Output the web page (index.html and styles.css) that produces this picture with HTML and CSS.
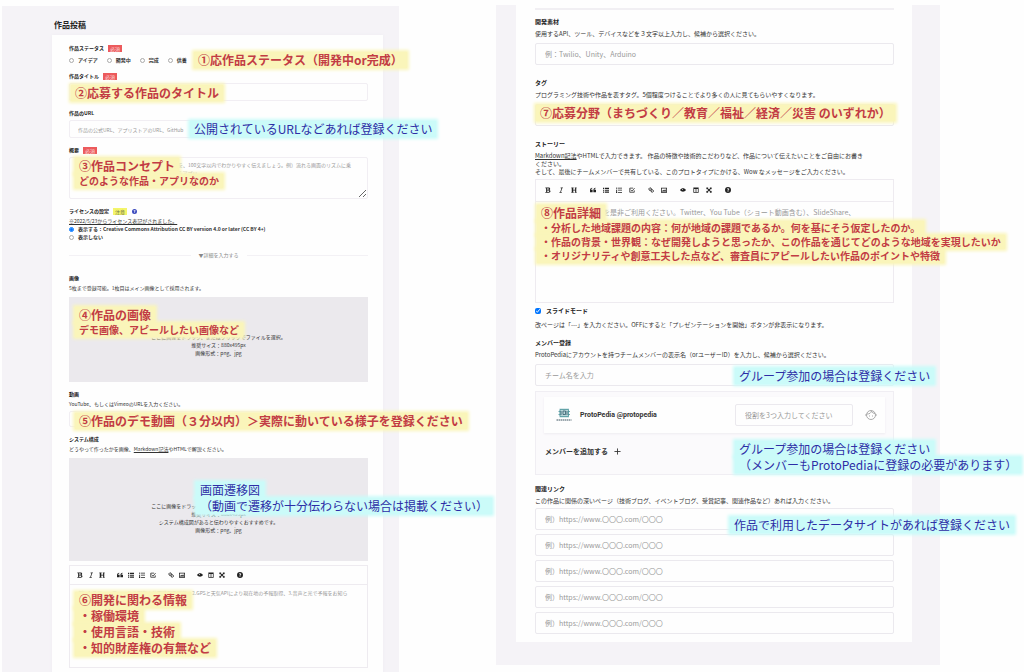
FILE: index.html
```html
<!DOCTYPE html>
<html lang="ja">
<head>
<meta charset="utf-8">
<title>作品投稿</title>
<link rel="stylesheet" href="styles.css">
</head>
<body>
<svg class="sprite" aria-hidden="true">
  <symbol id="i-bold" viewBox="0 0 16 16"><path fill-rule="evenodd" d="M1 1h8c6 0 6 6 2 7 5 1 5 7-1 7H1v-2h2V3H1zM6 3v4h2c3 0 3-4 0-4zm0 6v4h3c3 0 3-4 0-4z"/></symbol>
  <symbol id="i-italic" viewBox="0 0 16 16"><path d="M7 1h6v2h-2L8 13h2v2H4v-2h2L9 3H7z"/></symbol>
  <symbol id="i-head" viewBox="0 0 16 16"><path d="M1 1h6v2H6v4h5V3h-1V1h5v2h-1v10h1v2h-5v-2h1V9H6v4h1v2H1v-2h1V3H1z"/></symbol>
  <symbol id="i-quote" viewBox="0 0 16 16"><path d="M0 9c0-4 2-7 6-7v2C4 4 3 6 3 7h4v7H0zm9 0c0-4 2-7 6-7v2c-2 0-3 2-3 3h4v7H9z"/></symbol>
  <symbol id="i-ul" viewBox="0 0 16 16"><path d="M0 2h3v3H0zm5 0h11v3H5zM0 7h3v3H0zm5 0h11v3H5zM0 12h3v3H0zm5 0h11v3H5z"/></symbol>
  <symbol id="i-ol" viewBox="0 0 16 16"><path d="M1 1h2v4H1zm4 1h11v2H5zM0 7h3v1L1 10h2v1H0zm5 0h11v2H5zM0 12h3v4H0zm5 1h11v2H5z"/></symbol>
  <symbol id="i-check" viewBox="0 0 16 16"><path fill="none" stroke="currentColor" stroke-width="2" d="M14 9v5H2V3h9M4 7l4 4 7-8"/></symbol>
  <symbol id="i-link" viewBox="0 0 16 16"><path fill="none" stroke="currentColor" stroke-width="2.4" d="M8 8 4 9 2 5l3-3 4 2v3M8 8l4-1 3 4-3 3-4-2V9"/></symbol>
  <symbol id="i-image" viewBox="0 0 16 16"><path fill-rule="evenodd" d="M0 2h16v13H0zm2 2v9h12V4zm0 8 4-5 2 3 3-4 3 6z"/></symbol>
  <symbol id="i-eye" viewBox="0 0 16 16"><path fill-rule="evenodd" d="M0 8c4-6 12-6 16 0-4 6-12 6-16 0zm6-2v2h2V5z"/></symbol>
  <symbol id="i-cols" viewBox="0 0 16 16"><path fill-rule="evenodd" d="M1 1h14v14H1zm2 4v8h4V5zm6 0v8h4V5z"/></symbol>
  <symbol id="i-full" viewBox="0 0 16 16"><path d="M1 1h5L5 3l3 3 3-3-1-2h5v5l-2-1-3 3 3 3 2-1v5h-5l1-2-3-3-3 3 1 2H1v-5l2 1 3-3-3-3-2 1z"/></symbol>
  <symbol id="i-help" viewBox="0 0 16 16"><path fill-rule="evenodd" d="M8 0a8 8 0 1 1 0 16A8 8 0 0 1 8 0zM5 6h2c0-2 3-2 2 0L7 8v2h2V9c5-3 1-8-3-5zm2 5v2h2v-2z"/></symbol>
</svg>

<div class="page">
  <main class="panel panel-main">
    <h1 class="page-title">作品投稿</h1>
    <form class="card">
      <fieldset class="field">
        <legend class="label">作品ステータス <span class="required">必須</span></legend>
        <div class="choices choices-row">
          <label><input type="radio" name="status">アイデア</label>
          <label><input type="radio" name="status">開発中</label>
          <label><input type="radio" name="status">完成</label>
          <label><input type="radio" name="status">供養</label>
        </div>
        <div class="note note-red note-status"><p>①応作品ステータス（開発中or完成）</p></div>
      </fieldset>

      <div class="field">
        <label class="label" for="title">作品タイトル <span class="required">必須</span></label>
        <input class="input" id="title" type="text">
        <div class="note note-red note-title"><p>②応募する作品のタイトル</p></div>
      </div>

      <div class="field">
        <label class="label" for="url">作品のURL</label>
        <input class="input" id="url" type="url" placeholder="作品の公式URL、アプリストアのURL、GitHub">
        <div class="note note-blue note-url"><p>公開されているURLなどあれば登録ください</p></div>
      </div>

      <div class="field">
        <label class="label" for="summary">概要 <span class="required">必須</span></label>
        <textarea class="input summary" id="summary" placeholder="どのような作品・アプリなのか、特徴や概要を、100文字以内でわかりやすく伝えましょう。例）流れる画面のリズムに乗&#10;って体を動かしながら、みんなで楽しくできるアプリ。"></textarea>
        <div class="note note-red note-concept"><p>③作品コンセプト</p><p class="small">どのような作品・アプリなのか</p></div>
      </div>

      <fieldset class="field">
        <legend class="label">ライセンスの設定 <span class="optional">注意</span> <svg class="hint-icon"><use href="#i-help"/></svg></legend>
        <p class="hint"><a href="#license">※2022/5/23からライセンス表記がされました。</a></p>
        <div class="choices">
          <label><input type="radio" name="license" checked>表示する：Creative Commons Attribution CC BY version 4.0 or later (CC BY 4+)</label>
          <label><input type="radio" name="license">表示しない</label>
        </div>
      </fieldset>

      <div class="divider"><span>▼詳細を入力する</span></div>

      <section class="field">
        <h2 class="label">画像</h2>
        <p class="hint">5枚まで登録可能。1枚目はメイン画像として採用されます。</p>
        <div class="drop">
          <p>ここに画像をドラッグ、またはクリックでファイルを選択。</p>
          <p>推奨サイズ：880x495px</p>
          <p>画像形式：png、jpg</p>
        </div>
        <div class="note note-red note-image"><p>④作品の画像</p><p class="small">デモ画像、アピールしたい画像など</p></div>
      </section>

      <div class="field">
        <label class="label" for="video">動画</label>
        <p class="hint">YouTube、もしくはVimeoのURLを入力ください。</p>
        <input class="input input-short" id="video" type="url">
        <div class="note note-red note-video"><p>⑤作品のデモ動画（３分以内）＞実際に動いている様子を登録ください</p></div>
      </div>

      <section class="field">
        <h2 class="label">システム構成</h2>
        <p class="hint">どうやって作ったかを画像、<a href="#markdown">Markdown記法</a>やHTMLで解説ください。</p>
        <div class="drop drop-tall">
          <p>ここに画像をドラッグ、またはクリックでファイルを選択。</p>
          <p>推奨サイズ：880x495px</p>
          <p>システム構成図があると伝わりやすくおすすめです。</p>
          <p>画像形式：png、jpg</p>
        </div>
        <div class="note note-blue note-flow"><p>画面遷移図</p><p>（動画で遷移が十分伝わらない場合は掲載ください）</p></div>
      </section>

      <div class="field editor editor-system">
        <div class="toolbar">
          <div class="tools"><button type="button" aria-label="太字"><svg><use href="#i-bold"/></svg></button><button type="button" aria-label="斜体"><svg><use href="#i-italic"/></svg></button><button type="button" aria-label="見出し"><svg><use href="#i-head"/></svg></button></div>
          <div class="tools"><button type="button" aria-label="引用"><svg><use href="#i-quote"/></svg></button><button type="button" aria-label="リスト"><svg><use href="#i-ul"/></svg></button><button type="button" aria-label="番号リスト"><svg><use href="#i-ol"/></svg></button><button type="button" aria-label="チェック"><svg><use href="#i-check"/></svg></button></div>
          <div class="tools"><button type="button" aria-label="リンク"><svg><use href="#i-link"/></svg></button><button type="button" aria-label="画像"><svg><use href="#i-image"/></svg></button></div>
          <div class="tools"><button type="button" aria-label="プレビュー"><svg><use href="#i-eye"/></svg></button><button type="button" aria-label="分割"><svg><use href="#i-cols"/></svg></button><button type="button" aria-label="全画面"><svg><use href="#i-full"/></svg></button></div>
          <div class="tools"><button type="button" aria-label="ヘルプ"><svg><use href="#i-help"/></svg></button></div>
        </div>
        <textarea aria-label="システム構成" placeholder="例）1.スマートフォンから現在の位置情報を送信、2.GPSと天気APIにより現在地の予報取得、3.音声と光で予報をお知ら"></textarea>
        <div class="note note-red note-system"><p>⑥開発に関わる情報</p><p>・稼働環境</p><p>・使用言語・技術</p><p>・知的財産権の有無など</p></div>
      </div>
    </form>
  </main>

  <section class="panel panel-side">
    <form class="card">
      <hr class="rule">
      <div class="field">
        <label class="label" for="material">開発素材</label>
        <p class="hint">使用するAPI、ツール、デバイスなどを３文字以上入力し、候補から選択ください。</p>
        <input class="input" id="material" type="text" placeholder="例：Twilio、Unity、Arduino">
      </div>

      <div class="field">
        <label class="label" for="tag">タグ</label>
        <p class="hint">プログラミング技術や作品を表すタグ。5個程度つけることでより多くの人に見てもらいやすくなります。</p>
        <input class="input" id="tag" type="text">
        <div class="note note-red note-tag"><p>⑦応募分野（まちづくり／教育／福祉／経済／災害 のいずれか）</p></div>
      </div>

      <div class="field">
        <label class="label" for="story">ストーリー</label>
        <p class="hint"><a href="#markdown">Markdown記法</a>やHTMLで入力できます。 作品の特徴や技術的こだわりなど、作品について伝えたいことをご自由にお書き<br>ください。<br>そして、最後にチームメンバーで共有している、このプロトタイプにかける、Wow なメッセージをご入力ください。</p>
        <div class="editor editor-story">
          <div class="toolbar">
            <div class="tools"><button type="button" aria-label="太字"><svg><use href="#i-bold"/></svg></button><button type="button" aria-label="斜体"><svg><use href="#i-italic"/></svg></button><button type="button" aria-label="見出し"><svg><use href="#i-head"/></svg></button></div>
            <div class="tools"><button type="button" aria-label="引用"><svg><use href="#i-quote"/></svg></button><button type="button" aria-label="リスト"><svg><use href="#i-ul"/></svg></button><button type="button" aria-label="番号リスト"><svg><use href="#i-ol"/></svg></button><button type="button" aria-label="チェック"><svg><use href="#i-check"/></svg></button></div>
            <div class="tools"><button type="button" aria-label="リンク"><svg><use href="#i-link"/></svg></button><button type="button" aria-label="画像"><svg><use href="#i-image"/></svg></button></div>
            <div class="tools"><button type="button" aria-label="プレビュー"><svg><use href="#i-eye"/></svg></button><button type="button" aria-label="分割"><svg><use href="#i-cols"/></svg></button><button type="button" aria-label="全画面"><svg><use href="#i-full"/></svg></button></div>
            <div class="tools"><button type="button" aria-label="ヘルプ"><svg><use href="#i-help"/></svg></button></div>
          </div>
          <textarea id="story" placeholder="外部埋め込み機能を是非ご利用ください。Twitter、You Tube（ショート動画含む）、SlideShare、"></textarea>
          <div class="note note-red note-story"><p>⑧作品詳細</p><p class="small">・分析した地域課題の内容：何が地域の課題であるか。何を基にそう仮定したのか。</p><p class="small">・作品の背景・世界観：なぜ開発しようと思ったか、この作品を通じてどのような地域を実現したいか</p><p class="small">・オリジナリティや創意工夫した点など、審査員にアピールしたい作品のポイントや特徴</p></div>
        </div>
        <label class="label slide-mode"><input type="checkbox" checked>スライドモード</label>
        <p class="hint">改ページは「---」を入力ください。OFFにすると「プレゼンテーションを開始」ボタンが非表示になります。</p>
      </div>

      <div class="field field-members">
        <label class="label" for="team">メンバー登録</label>
        <p class="hint">ProtoPediaにアカウントを持つチームメンバーの表示名（orユーザーID）を入力し、候補から選択ください。</p>
        <input class="input" id="team" type="text" placeholder="チーム名を入力">
        <div class="members">
          <div class="member">
            <svg class="avatar" viewBox="0 0 32 28"><path fill="#b9d6d9" d="M7 1h19v18H7z"/><path fill="none" stroke="#4d959c" stroke-width="1.6" d="M8 3h17v14H8zM5 7h4M24 7h4M5 13h4M24 13h4"/><path fill="none" stroke="#345c6b" stroke-width="1.6" d="M14 6h5v7h-5zM10 6v8M22 6v8"/><path stroke="#3d5560" stroke-width="2" stroke-dasharray="3 1" d="M1 24h30"/></svg>
            <span class="member-name">ProtoPedia @protopedia</span>
            <input class="input" type="text" aria-label="役割" placeholder="役割を3つ入力してください">
            <svg class="face" viewBox="0 0 24 24"><circle cx="12" cy="12" r="9"/><path d="M4 10c5 0 8-2 9-6 1 3 4 5 7 5M9 13v2M15 13v2"/><path d="M2 10v4M22 10v4"/></svg>
          </div>
          <button class="add" type="button">メンバーを追加する <svg viewBox="0 0 16 16"><path d="M8 1v14M1 8h14"/></svg></button>
        </div>
        <div class="note note-blue note-team"><p>グループ参加の場合は登録ください</p></div>
        <div class="note note-blue note-members"><p>グループ参加の場合は登録ください</p><p>（メンバーもProtoPediaに登録の必要があります）</p></div>
      </div>

      <fieldset class="field field-links">
        <legend class="label">関連リンク</legend>
        <p class="hint">この作品に関係の深いページ（技術ブログ、イベントブログ、受賞記事、関連作品など）あれば入力ください。</p>
        <div class="links">
          <input class="input" type="url" aria-label="関連リンク1" placeholder="例）https://www.〇〇〇.com/〇〇〇">
          <input class="input" type="url" aria-label="関連リンク2" placeholder="例）https://www.〇〇〇.com/〇〇〇">
          <input class="input" type="url" aria-label="関連リンク3" placeholder="例）https://www.〇〇〇.com/〇〇〇">
          <input class="input" type="url" aria-label="関連リンク4" placeholder="例）https://www.〇〇〇.com/〇〇〇">
          <input class="input" type="url" aria-label="関連リンク5" placeholder="例）https://www.〇〇〇.com/〇〇〇">
        </div>
        <div class="note note-blue note-links"><p>作品で利用したデータサイトがあれば登録ください</p></div>
      </fieldset>
    </form>
  </section>
</div>
</body>
</html>
```

FILE: styles.css
```css
* {
  box-sizing: border-box;
}

body,
h1,
h2,
p,
fieldset,
legend {
  margin: 0;
  padding: 0;
  border: 0;
  min-width: 0;
}

body {
  background: #fefefe;
  color: #333;
  font-family: "Noto Sans CJK JP", "Noto Sans", sans-serif;
  overflow: hidden;
}

input,
textarea,
button {
  margin: 0;
  font: inherit;
  color: inherit;
}

a {
  color: inherit;
  text-underline-offset: 1px;
}

.sprite {
  position: absolute;
  width: 0;
  height: 0;
}

.page {
  display: grid;
  grid-template-columns: 397fr 444fr;
  column-gap: 97px;
  align-items: start;
  min-height: 100vh;
  padding: 5px 84px 0 2px;
}

/* panels */

.panel {
  background: #f5f3f7;
  line-height: 8px;
}

.panel-main {
  margin-top: 1px;
  padding: 0 16px 0 50px;
  font-size: 5px;
}

.panel-side {
  padding: 0 28px 23px 20px;
  font-size: 6px;
}

.page-title {
  padding: 13px 2px 4px;
  font-size: 8px;
  line-height: 12px;
  font-weight: 700;
  color: #222;
}

.card {
  background: #fefefe;
}

.panel-main .card {
  padding: 9px 15px 6px 17px;
  box-shadow: 0 0 3px #eeecf1;
}

.panel-side .card {
  padding: 3px 18px 8px 19px;
}

.rule {
  height: 2px;
  margin: 0;
  border: 0;
  background: #f1eff3;
}

/* fields */

.field {
  position: relative;
  margin-bottom: 8px;
}

.panel-side .field {
  margin: 14px 0 0;
}

.panel-side .field-members,
.panel-side .field-links {
  margin-top: 10px;
}

.panel-side .rule + .field {
  margin-top: 8px;
}

.label {
  display: flex;
  align-items: center;
  gap: 3px;
  height: 8px;
  font-size: inherit;
  font-weight: 700;
  color: #222;
}

.required,
.optional {
  width: 14px;
  height: 7px;
  margin-left: 1px;
  line-height: 7px;
  text-align: center;
  font-weight: 400;
  background: #ec5a5c;
  color: #fbd5d5;
}

.optional {
  background: #f4f56a;
  color: #6c7045;
}

.hint-icon {
  width: 5px;
  height: 5px;
  margin-left: 2px;
  fill: #3a49bd;
}

.hint {
  margin-top: 2px;
  color: #333;
}

.panel-side .hint {
  margin-top: 4px;
}

.input {
  display: block;
  width: 100%;
  height: 18px;
  margin-top: 3px;
  padding: 0 8px;
  background: #fefefe;
  border: 1px solid #f1eef3;
  border-radius: 2px;
}

.input-short {
  height: 16px;
}

.panel-side .input {
  height: 22px;
  margin-top: 5px;
  padding: 0 9px;
  border-color: #ebe9ee;
  font-size: 7px;
}

::placeholder {
  color: #999;
  opacity: 1;
}

.summary {
  height: 42px;
  padding: 3px 8px;
}

/* radios and tick boxes */

.choices {
  display: grid;
  font-weight: 700;
}

.choices-row {
  display: flex;
  gap: 9px;
  margin-top: 4px;
}

.choices label {
  display: flex;
  align-items: center;
  gap: 4px;
}

.choices input {
  width: 5px;
  height: 5px;
}

.choices input:not(:checked) {
  appearance: none;
  border: 1px solid #aaa;
  border-radius: 50%;
}

.panel-side .slide-mode {
  margin: 4px 0 6px;
  gap: 5px;
}

.slide-mode input {
  width: 6px;
  height: 6px;
}

.divider {
  display: flex;
  align-items: center;
  gap: 8px;
  margin: 10px 0 15px;
  color: #888;
}

.divider::before,
.divider::after {
  content: "";
  flex: 1;
  height: 1px;
  background: #f3f1f5;
}

/* upload areas */

.drop {
  height: 85px;
  margin-top: 5px;
  padding-top: 36px;
  background: #ebe9ed;
  text-align: center;
}

.drop-tall {
  height: 103px;
  padding-top: 44px;
}

/* markdown editor */

.editor {
  display: flex;
  flex-direction: column;
  border: 1px solid #eeebf0;
}

.editor-system {
  height: 103px;
  margin: -4px 0 0;
}

.editor-story {
  position: relative;
  height: 124px;
  margin-top: 3px;
}

.toolbar {
  display: flex;
  gap: 12px;
  padding: 6px 7px;
  border-bottom: 1px solid #eeebf0;
}

.tools {
  display: flex;
  gap: 5px;
}

.tools button {
  display: flex;
  padding: 0;
  border: 0;
  background: none;
  color: #222;
}

.tools svg {
  width: 6px;
  height: 6px;
  fill: currentColor;
}

.editor-story .toolbar {
  gap: 13px;
  padding: 7px 9px 8px;
}

.editor-story .tools {
  gap: 7px;
}

.editor-story .tools svg {
  width: 6px;
  height: 6px;
}

.editor textarea {
  flex: 1;
  padding: 4px 8px;
  border: 0;
  background: none;
  resize: none;
}

.editor-story textarea {
  padding: 6px 11px;
  font-size: 7px;
}

/* members */

.members {
  height: 84px;
  margin-top: 5px;
  padding: 5px 8px;
  background: #fbfafc;
  border: 1px solid #f0eef3;
}

.member {
  display: flex;
  align-items: center;
  height: 36px;
  padding: 0 8px 0 12px;
  background: #fefefe;
  box-shadow: 0 1px 2px #eeecf1;
  font-family: Roboto, "Noto Sans CJK JP", sans-serif;
}

.avatar {
  width: 16px;
  height: 14px;
}

.member-name {
  flex: 1;
  padding-left: 8px;
  font-size: 7px;
  font-weight: 700;
}

.panel-side .member .input {
  width: 118px;
  margin: 0 12px 0 0;
  font-family: "Noto Sans CJK JP", sans-serif;
}

.face {
  width: 12px;
  height: 12px;
  fill: none;
  stroke: #aaa;
  stroke-width: 2;
}

.add {
  display: flex;
  align-items: center;
  gap: 6px;
  margin-top: 14px;
  padding: 0 1px;
  border: 0;
  background: none;
  font-size: 7px;
  font-weight: 700;
}

.add svg {
  width: 7px;
  height: 7px;
  stroke: #333;
  stroke-width: 2;
}

.links {
  display: grid;
  gap: 4px;
  margin-top: 3px;
}

.panel-side .links .input {
  margin: 0;
}

/* callouts laid over the form */

.note {
  position: absolute;
  z-index: 1;
  font-size: 12px;
  line-height: 16px;
  white-space: nowrap;
}

.note p {
  width: fit-content;
  padding: 0 4px;
}

.note .small {
  font-size: 10px;
  line-height: 14px;
}

.note-red {
  color: #c23c44;
  font-weight: 700;
}

.note-red p {
  background: #faf5ba;
  box-shadow: 0 0 3px 2px #faf5ba;
}

.note-blue {
  color: #2d2da6;
}

.note-blue p {
  background: #cbfbf9;
  box-shadow: 0 0 3px 2px #cbfbf9;
}

.note-status { left: 125px; top: 0; }
.note-title { left: 2px; top: 13px; }
.note-url { left: 121px; top: 12px; }
.note-concept { left: 6px; top: 12px; }
.note-image { left: 6px; top: 33px; }
.note-video { left: 6px; top: 23px; }
.note-flow { left: 127px; top: 47px; }
.note-system { left: 5px; top: 26px; }
.note-tag { left: 1px; top: 26px; }
.note-story { left: 1px; top: 25px; }
.note-team { left: 200px; top: 29px; }
.note-members { left: 200px; top: 102px; }
.note-links { left: 195px; top: 24px; }
```
